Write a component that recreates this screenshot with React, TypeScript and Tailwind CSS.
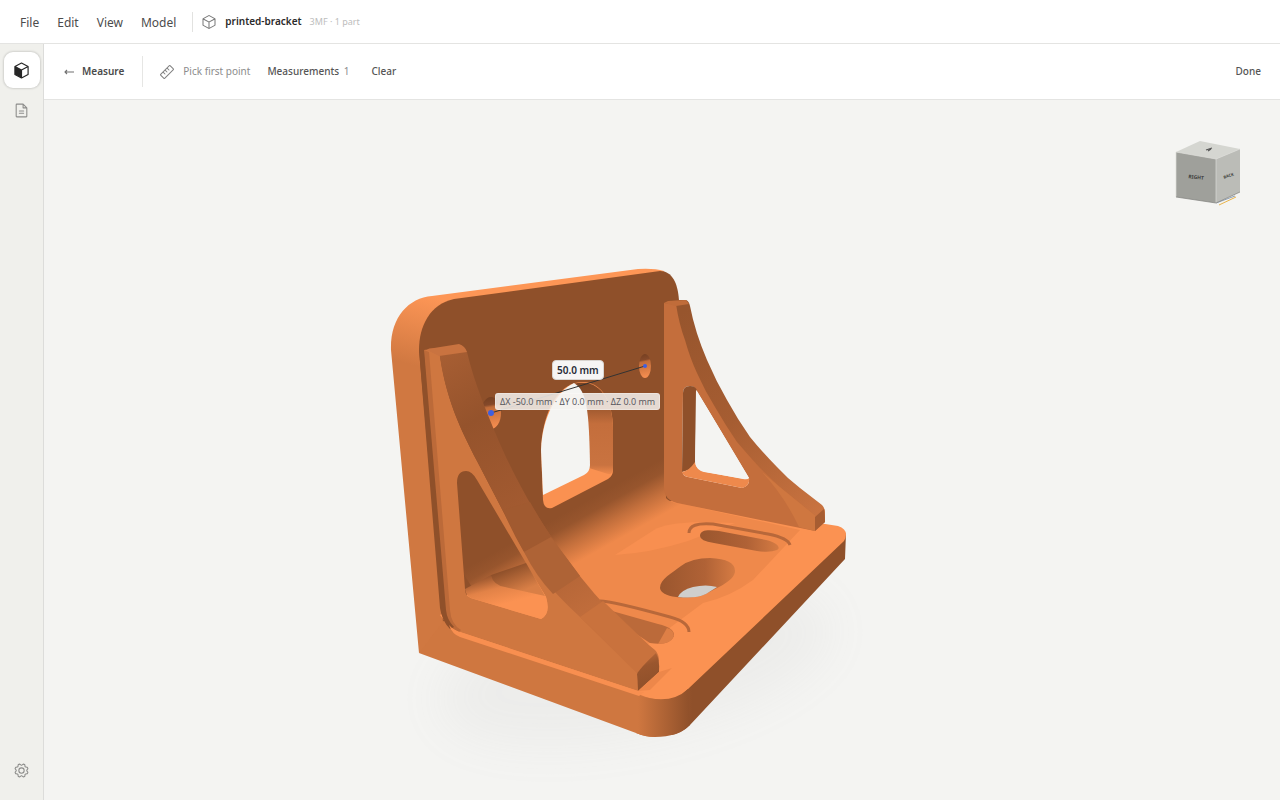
import { PiCube, PiFileText, PiGear, PiRuler } from 'react-icons/pi';

const MENUS = ['File', 'Edit', 'View', 'Model'];

function SolidCube() {
  return (
    <svg width="17" height="17" viewBox="0 0 16 16" aria-hidden="true">
      <path
        d="M8 1 14.2 4.3V11.7L8 15 1.8 11.7V4.3Z M1.8 4.3 8 7.6 14.2 4.3 M8 7.6V15"
        fill="none"
        stroke="#262626"
        strokeWidth="1.1"
        strokeLinejoin="round"
      />
      <path d="M1.8 4.3 8 7.6V15L1.8 11.7Z" fill="#262626" />
    </svg>
  );
}

function TopBar() {
  return (
    <header className="flex h-11 shrink-0 items-center border-b border-[#e4e4e2] bg-white pl-[11px]">
      <nav className="flex items-center pt-[2px]">
        {MENUS.map((menu) => (
          <button key={menu} className="px-[9px] text-[12px] leading-5 text-[#4c4c4c]">
            {menu}
          </button>
        ))}
      </nav>
      <div className="ml-[7px] h-5 w-px bg-[#e2e2e0]" />
      <PiCube size={16} className="ml-2 text-[#777777]" />
      <h1 className="ml-2 text-[10px] font-semibold text-[#2b2b2b]">printed-bracket</h1>
      <span className="ml-2 text-[9px] text-[#bdbdbd]">3MF · 1 part</span>
    </header>
  );
}

function Sidebar() {
  return (
    <aside className="flex w-11 shrink-0 flex-col items-center border-r border-[#dcdcda] bg-[#f0f0ec] pt-2 pb-[21px]">
      <button
        aria-label="Model"
        className="flex size-9 items-center justify-center rounded-[9px] bg-white shadow-[0_0_2px_1px_rgba(0,0,0,0.13)]"
      >
        <SolidCube />
      </button>
      <button aria-label="Document" className="mt-[14px] text-[#8c8c8a]">
        <PiFileText size={17} />
      </button>
      <button aria-label="Settings" className="mt-auto text-[#8c8c8a]">
        <PiGear size={17} />
      </button>
    </aside>
  );
}

function MeasureBar() {
  return (
    <div className="flex h-14 shrink-0 items-center border-b border-[#e4e4e2] bg-white pr-[19px] pl-5 text-[10px] text-[#555555]">
      <button className="flex items-center gap-2 font-semibold text-[#4a4a4a]">
        <svg width="10" height="6" viewBox="0 0 10 6" aria-hidden="true">
          <path d="M10 3H1M3 1 1 3 3 5" fill="none" stroke="#707070" strokeWidth="1.1" />
        </svg>
        Measure
      </button>
      <div className="ml-[18px] h-[31px] w-px bg-[#e6e6e4]" />
      <PiRuler size={16} className="ml-4 text-[#808080]" />
      <span className="ml-2 text-[#8c8c8c]">Pick first point</span>
      <button className="ml-[17px] font-medium">
        Measurements <span className="ml-[2px] font-normal text-[#8c8c8c]">1</span>
      </button>
      <button className="ml-[22px] font-medium">Clear</button>
      <button className="ml-auto font-medium">Done</button>
    </div>
  );
}

function Bracket() {
  return (
    <g>
      <ellipse cx="635" cy="665" rx="200" ry="70" fill="#999" opacity="0.08" filter="url(#soften)" transform="rotate(-12 635 665)" />

      {/* back plate */}
      <path d="M391 350C390 318 408 298 432 296L638 269Q654 268 664 271L650 320 445 640 419 653Z" fill="url(#plateSide)" />
      <path d="M419 350C419 326 430 304 454 299L660 271C672 271 678 283 679 301L680 510 560 620 443 622Z" fill="#8f502a" />

      {/* base */}
      <path d="M682 686 843 536 846 533 845 559 690 725Q682 733 672 735L672 692Z" fill="url(#baseFront)" />
      <path d="M440 615 455 634 560 668 640 697Q670 710 688 689L844 541Q850 530 838 526L675 500 540 540Z" fill="#fb9252" />
      <path d="M560 552 664 500 800 530 753 580Q730 597 703 603L640 650Z" fill="#ef894b" />
      <path d="M520 500 664 430 666 498Q670 503 690 507L640 545 560 590 480 600 455 560Z" fill="url(#fillet)" />
      <path d="M615 555 654 530Q665 523 700 522L735 523 688 541Q650 553 615 555Z" fill="#f88f50" />
      <path d="M419 653 445 619Q450 632 462 636L638 694Q652 700 664 700L680 720 655 737Q645 737 636 733Z" fill="#cf7740" />
      <path d="M638 695Q670 706 688 689L690 725Q678 737 655 737Q645 737 636 733Z" fill="url(#baseCorner)" />

      {/* slots */}
      <path d="M689 533Q689 522 713 524L768 534Q788 538 790 545" fill="none" stroke="#b8683a" strokeWidth="3" />
      <path d="M700 536C700 529 710 530 719 531L766 540C778 543 781 548 777 550Q770 553 757 551L714 543Q700 541 700 536Z" fill="url(#slot)" />
      <path d="M600 601Q612 601 670 617Q689 622 689 632" fill="none" stroke="#b8683a" strokeWidth="3" />
      <path d="M612 611 658 624Q675 628 674 636Q670 646 650 643L630 630Z" fill="#bb6a3a" />
      <path d="M667 628Q674 630 674 636 671 644 658 644Z" fill="#dd7f46" />
      <path d="M660 588C660 579 672 573 681 566Q692 558 710 558Q735 559 735 571C735 581 716 588 706 594Q695 599 676 597Q661 595 660 588Z" fill="url(#slot)" />
      <path d="M678 597Q681 590 693 587Q706 584 717 587L706 594Q696 599 678 597Z" fill="#cfcfcd" />

      {/* window */}
      <path d="M541 450C542 415 556 388 575 383C600 377 613 400 613 430V470Q613 476 608 479L552 508Q544 510 543 500Z" fill="#fa9151" />
      <path d="M573 384C600 377 613 400 613 430V468Q613 475 608 474L589 468Z" fill="url(#windowSide)" />
      <path d="M541 450C542 417 557 391 574 383C587 391 589 410 590 465Q590 472 584 475L543 495Z" fill="#f4f4f2" />

      {/* screw holes */}
      <ellipse cx="645" cy="366" rx="6" ry="12" fill="url(#bore)" />
      <ellipse cx="491" cy="413" rx="10" ry="16" fill="url(#bore)" />

      {/* right rib */}
      <path d="M664 303 676 300 686 300Q689 301 690 306Q695 332 707 360Q716 381 727 400Q738 420 750 437Q763 453 777 467Q788 479 800 488L822 505Q825 508 825 512V522L815 531 804 520 740 460 690 380Z" fill="url(#ribEdge)" />
      <path
        fillRule="evenodd"
        d="M664 303 676 304Q679 324 685 340Q690 358 697 373Q705 391 715 407Q726 426 737 442Q749 456 760 468L780 487 817 517 815 531 677 503Q664 500 664 487ZM683 393Q683 386 690 386 695 386 697 391L749 478Q750 486 742 488L688 477Q682 476 682 469Z"
        fill="#c46e3c"
      />
      <path d="M683 393Q683 386 690 386 696 386 697 391L695 468 682 472Z" fill="#8f502a" />
      <path d="M682 472Q689 471 695 462 696 470 704 472L745 479 749 478Q750 486 742 488L688 477Q683 476 682 472Z" fill="#ee894c" />
      <path d="M696 390 697 391 749 478Q748 480 743 479L706 472Q695 470 695 461Z" fill="#f4f4f2" />
      <path d="M762 472Q785 497 799 527L815 531 817 517 781 488Z" fill="#cf7740" />
      <path d="M815 517 824 509Q825 516 825 522L815 531Z" fill="#a75d32" />
      <path d="M664 303 668 301 686 300 689 304 676 306Z" fill="#c06c3a" />

      {/* left rib */}
      <path
        fillRule="evenodd"
        d="M424 350 439 348C445 398 461 430 477 461L517 538Q530 563 560 594L637 671 638 691 460 632Q448 628 446 613ZM457 483Q457 471 466 471 472 471 477 480L546 597Q551 614 541 619L474 599Q465 597 465 589Z"
        fill="#cf7740"
      />
      <path d="M424 350 429 352 450 610Q451 624 461 630L459 632Q444 626 441 611Z" fill="#bc6a39" />
      <path d="M419 350 424 350 446 610Q447 620 454 627L450 629Q442 621 440 608Z" fill="#8f502a" />
      <path d="M449 625Q454 631 463 633L638 691 644 692 639 696 460 637Q452 634 449 625Z" fill="#f88f50" />
      <path d="M465 589 491 575 532 574 546 597Q551 614 541 619L474 599Q466 597 465 589Z" fill="url(#floorPeek)" />
      <path d="M491 575Q493 585 505 587L545 596 526 563Z" fill="url(#filletPeek)" />
      <path d="M439 350 459 345Q465 346 467 352C474 382 488 417 505 455C523 493 544 529 568 560Q592 594 627 628L655 650Q659 654 659 661L638 674 580 617C552 591 528 563 517 538L477 461C461 430 445 398 439 350Z" fill="url(#ribTop)" />
      <path d="M503 510 530 502Q542 523 552 538L524 552Q512 532 503 510Z" fill="#a15a30" />
      <path d="M524 552 551 537 580 576 553 594Q536 576 524 552Z" fill="#ae6336" />
      <path d="M580 617 603 601 656 652 638 674Z" fill="#c9723d" />
      <path d="M427 350Q428 348 434 348L459 344Q465 346 467 352L439 356Z" fill="#c97340" />
      <path d="M637 674Q640 668 656 653 660 660 659 672L638 691Z" fill="url(#toe)" />
      <path d="M659 672 672 668 650 690 638 691Z" fill="#ed874a" />
    </g>
  );
}

function ViewCube() {
  return (
    <g>
      <path d="M1219 205 1236 197" stroke="#e9b44c" strokeWidth="1" />
      <path d="M1216 203 1235 196" stroke="#8ea0b5" strokeWidth="1" />
      <path d="M1176 152 1200 141 1240 149 1216 159Z" fill="#d5d6d1" />
      <path d="M1176 152 1216 159V203L1176 197Z" fill="#9fa09b" />
      <path d="M1216 159 1240 149V192L1216 203Z" fill="#bbbcb7" />
      <path d="M1176 197V152L1216 159 1240 149M1216 159V203" fill="none" stroke="#dcddd9" strokeWidth="0.7" />
      <path d="M1176 197 1216 203 1240 192" fill="none" stroke="#7f807c" strokeWidth="0.7" />
      <g fill="#3c3c3a" fontSize="5" fontWeight="700" textAnchor="middle">
        <text x="1196" y="179" transform="rotate(6 1196 179)">RIGHT</text>
        <text x="1229" y="177" fontSize="4" transform="rotate(-18 1229 177)">BACK</text>
      </g>
      <path d="M1206 150 1212 148M1208 151 1211 149" stroke="#555" strokeWidth="1.2" />
    </g>
  );
}

function Viewport() {
  return (
    <main className="relative min-h-0 flex-1 overflow-hidden bg-[#f4f4f2]">
      <svg className="h-full w-full" viewBox="44 100 1236 700" aria-label="printed-bracket model">
        <defs>
          <filter id="soften" x="-30%" y="-60%" width="160%" height="220%">
            <feGaussianBlur stdDeviation="24" />
          </filter>
          <linearGradient id="plateSide" gradientUnits="userSpaceOnUse" x1="430" y1="296" x2="412" y2="365">
            <stop offset="0" stopColor="#fd9656" />
            <stop offset="1" stopColor="#d07841" />
          </linearGradient>
          <linearGradient id="fillet" gradientUnits="userSpaceOnUse" x1="588" y1="500" x2="612" y2="543">
            <stop offset="0" stopColor="#8f502a" />
            <stop offset="0.25" stopColor="#97552d" />
            <stop offset="0.6" stopColor="#c36f3c" />
            <stop offset="1" stopColor="#ef894b" />
          </linearGradient>
          <linearGradient id="baseCorner" gradientUnits="userSpaceOnUse" x1="638" y1="0" x2="690" y2="0">
            <stop offset="0" stopColor="#cf7740" />
            <stop offset="1" stopColor="#8f502a" />
          </linearGradient>
          <linearGradient id="baseFront" gradientUnits="userSpaceOnUse" x1="672" y1="0" x2="692" y2="0">
            <stop offset="0" stopColor="#a55c31" />
            <stop offset="1" stopColor="#8f502a" />
          </linearGradient>
          <linearGradient id="slot">
            <stop offset="0" stopColor="#9a562e" />
            <stop offset="0.6" stopColor="#b06236" />
            <stop offset="1" stopColor="#d57b43" />
          </linearGradient>
          <linearGradient id="windowSide" x1="0" y1="0" x2="0" y2="1">
            <stop offset="0" stopColor="#7c4524" />
            <stop offset="0.2" stopColor="#8f502a" />
            <stop offset="0.45" stopColor="#c46e3c" />
            <stop offset="0.9" stopColor="#c97340" />
            <stop offset="1" stopColor="#ee894c" />
          </linearGradient>
          <linearGradient id="bore" x1="0" y1="0" x2="0.1" y2="1">
            <stop offset="0" stopColor="#743f20" />
            <stop offset="0.28" stopColor="#85492a" />
            <stop offset="0.36" stopColor="#c06c3a" />
            <stop offset="1" stopColor="#f58d4f" />
          </linearGradient>
          <linearGradient id="ribEdge" gradientUnits="userSpaceOnUse" x1="685" y1="310" x2="815" y2="515">
            <stop offset="0" stopColor="#97552d" />
            <stop offset="0.5" stopColor="#a65d32" />
            <stop offset="1" stopColor="#c97340" />
          </linearGradient>
          <linearGradient id="ribTop" gradientUnits="userSpaceOnUse" x1="450" y1="350" x2="640" y2="660">
            <stop offset="0" stopColor="#a75e33" />
            <stop offset="0.2" stopColor="#95532c" />
            <stop offset="0.5" stopColor="#a45b31" />
            <stop offset="0.8" stopColor="#bf6c3b" />
            <stop offset="1" stopColor="#cb743f" />
          </linearGradient>
          <linearGradient id="floorPeek" gradientUnits="userSpaceOnUse" x1="500" y1="573" x2="508" y2="603">
            <stop offset="0" stopColor="#9a562e" />
            <stop offset="0.45" stopColor="#e28247" />
            <stop offset="1" stopColor="#fb9252" />
          </linearGradient>
          <linearGradient id="filletPeek" gradientUnits="userSpaceOnUse" x1="510" y1="568" x2="520" y2="592">
            <stop offset="0" stopColor="#8f502a" />
            <stop offset="1" stopColor="#d97f46" />
          </linearGradient>
          <linearGradient id="toe" x1="0" y1="0" x2="0.2" y2="1">
            <stop offset="0" stopColor="#c06c3a" />
            <stop offset="0.4" stopColor="#9a562e" />
            <stop offset="1" stopColor="#8f502a" />
          </linearGradient>
        </defs>
        <Bracket />
        <path d="M491 413 645 366" stroke="#333333" strokeWidth="1" />
        <circle cx="491" cy="413" r="3" fill="#3f5fe0" />
        <circle cx="645" cy="366" r="2" fill="#3f5fe0" />
        <ViewCube />
      </svg>
      <output className="absolute top-[260px] left-[508px] rounded-[4px] border border-[#d8d4d0] bg-[#f6f5f4] px-1 text-[10px] leading-[18px] font-semibold whitespace-nowrap text-[#272b36]">
        50.0 mm
      </output>
      <output className="absolute top-[293px] left-[451px] rounded-[3px] border border-white/30 bg-[#f4f2f0]/85 px-1 font-['Open_Sans',sans-serif] text-[9px] leading-[15px] font-medium whitespace-nowrap text-[#54545a]">
        ΔX -50.0 mm · ΔY 0.0 mm · ΔZ 0.0 mm
      </output>
    </main>
  );
}

export default function App() {
  return (
    <div className="flex h-screen flex-col bg-white font-['Noto_Sans',sans-serif]">
      <TopBar />
      <div className="flex min-h-0 flex-1">
        <Sidebar />
        <div className="flex min-w-0 flex-1 flex-col">
          <MeasureBar />
          <Viewport />
        </div>
      </div>
    </div>
  );
}
